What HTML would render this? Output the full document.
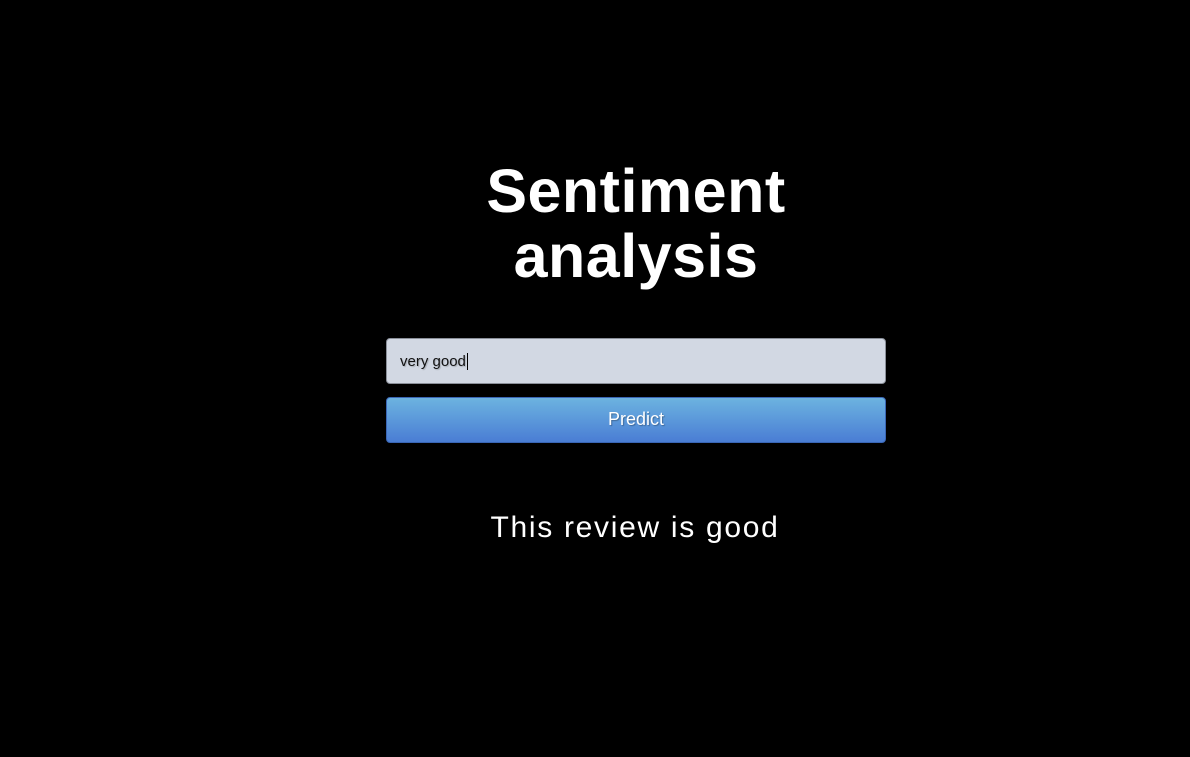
<!DOCTYPE html>
<html><head><style>
html,body{margin:0;background:#000;width:1190px;height:757px;overflow:hidden;font-family:"Liberation Sans",Arial,sans-serif;}
h1{position:absolute;left:386px;width:500px;top:159px;margin:0;text-align:center;color:#fff;font-size:61px;font-weight:bold;line-height:65px;letter-spacing:0.5px;}
.inp{position:absolute;left:386px;top:338px;width:500px;height:46px;border:1px solid #8a8f99;border-radius:4px;background:#d2d8e3;box-sizing:border-box;font-size:15px;line-height:45px;padding-left:13px;color:#111;text-shadow:1px 1px 1px rgba(0,0,0,.2);}
.btn{position:absolute;left:386px;top:397px;width:500px;height:46px;border:1px solid #3a66b5;border-radius:4px;background:linear-gradient(#6cb3e0,#4a7dd4);box-sizing:border-box;color:#fff;font-size:18px;line-height:43px;text-align:center;text-shadow:1px 1px 1px rgba(0,0,0,.3);}
.res{position:absolute;left:386px;width:498px;top:511px;text-align:center;color:#fff;font-size:30px;letter-spacing:1.7px;}
</style></head><body>
<h1>Sentiment<br>analysis</h1>
<div class="inp">very good<span style="border-left:1px solid #000;margin-left:1px"></span></div>
<div class="btn">Predict</div>
<div class="res">This review is good</div>
</body></html>
